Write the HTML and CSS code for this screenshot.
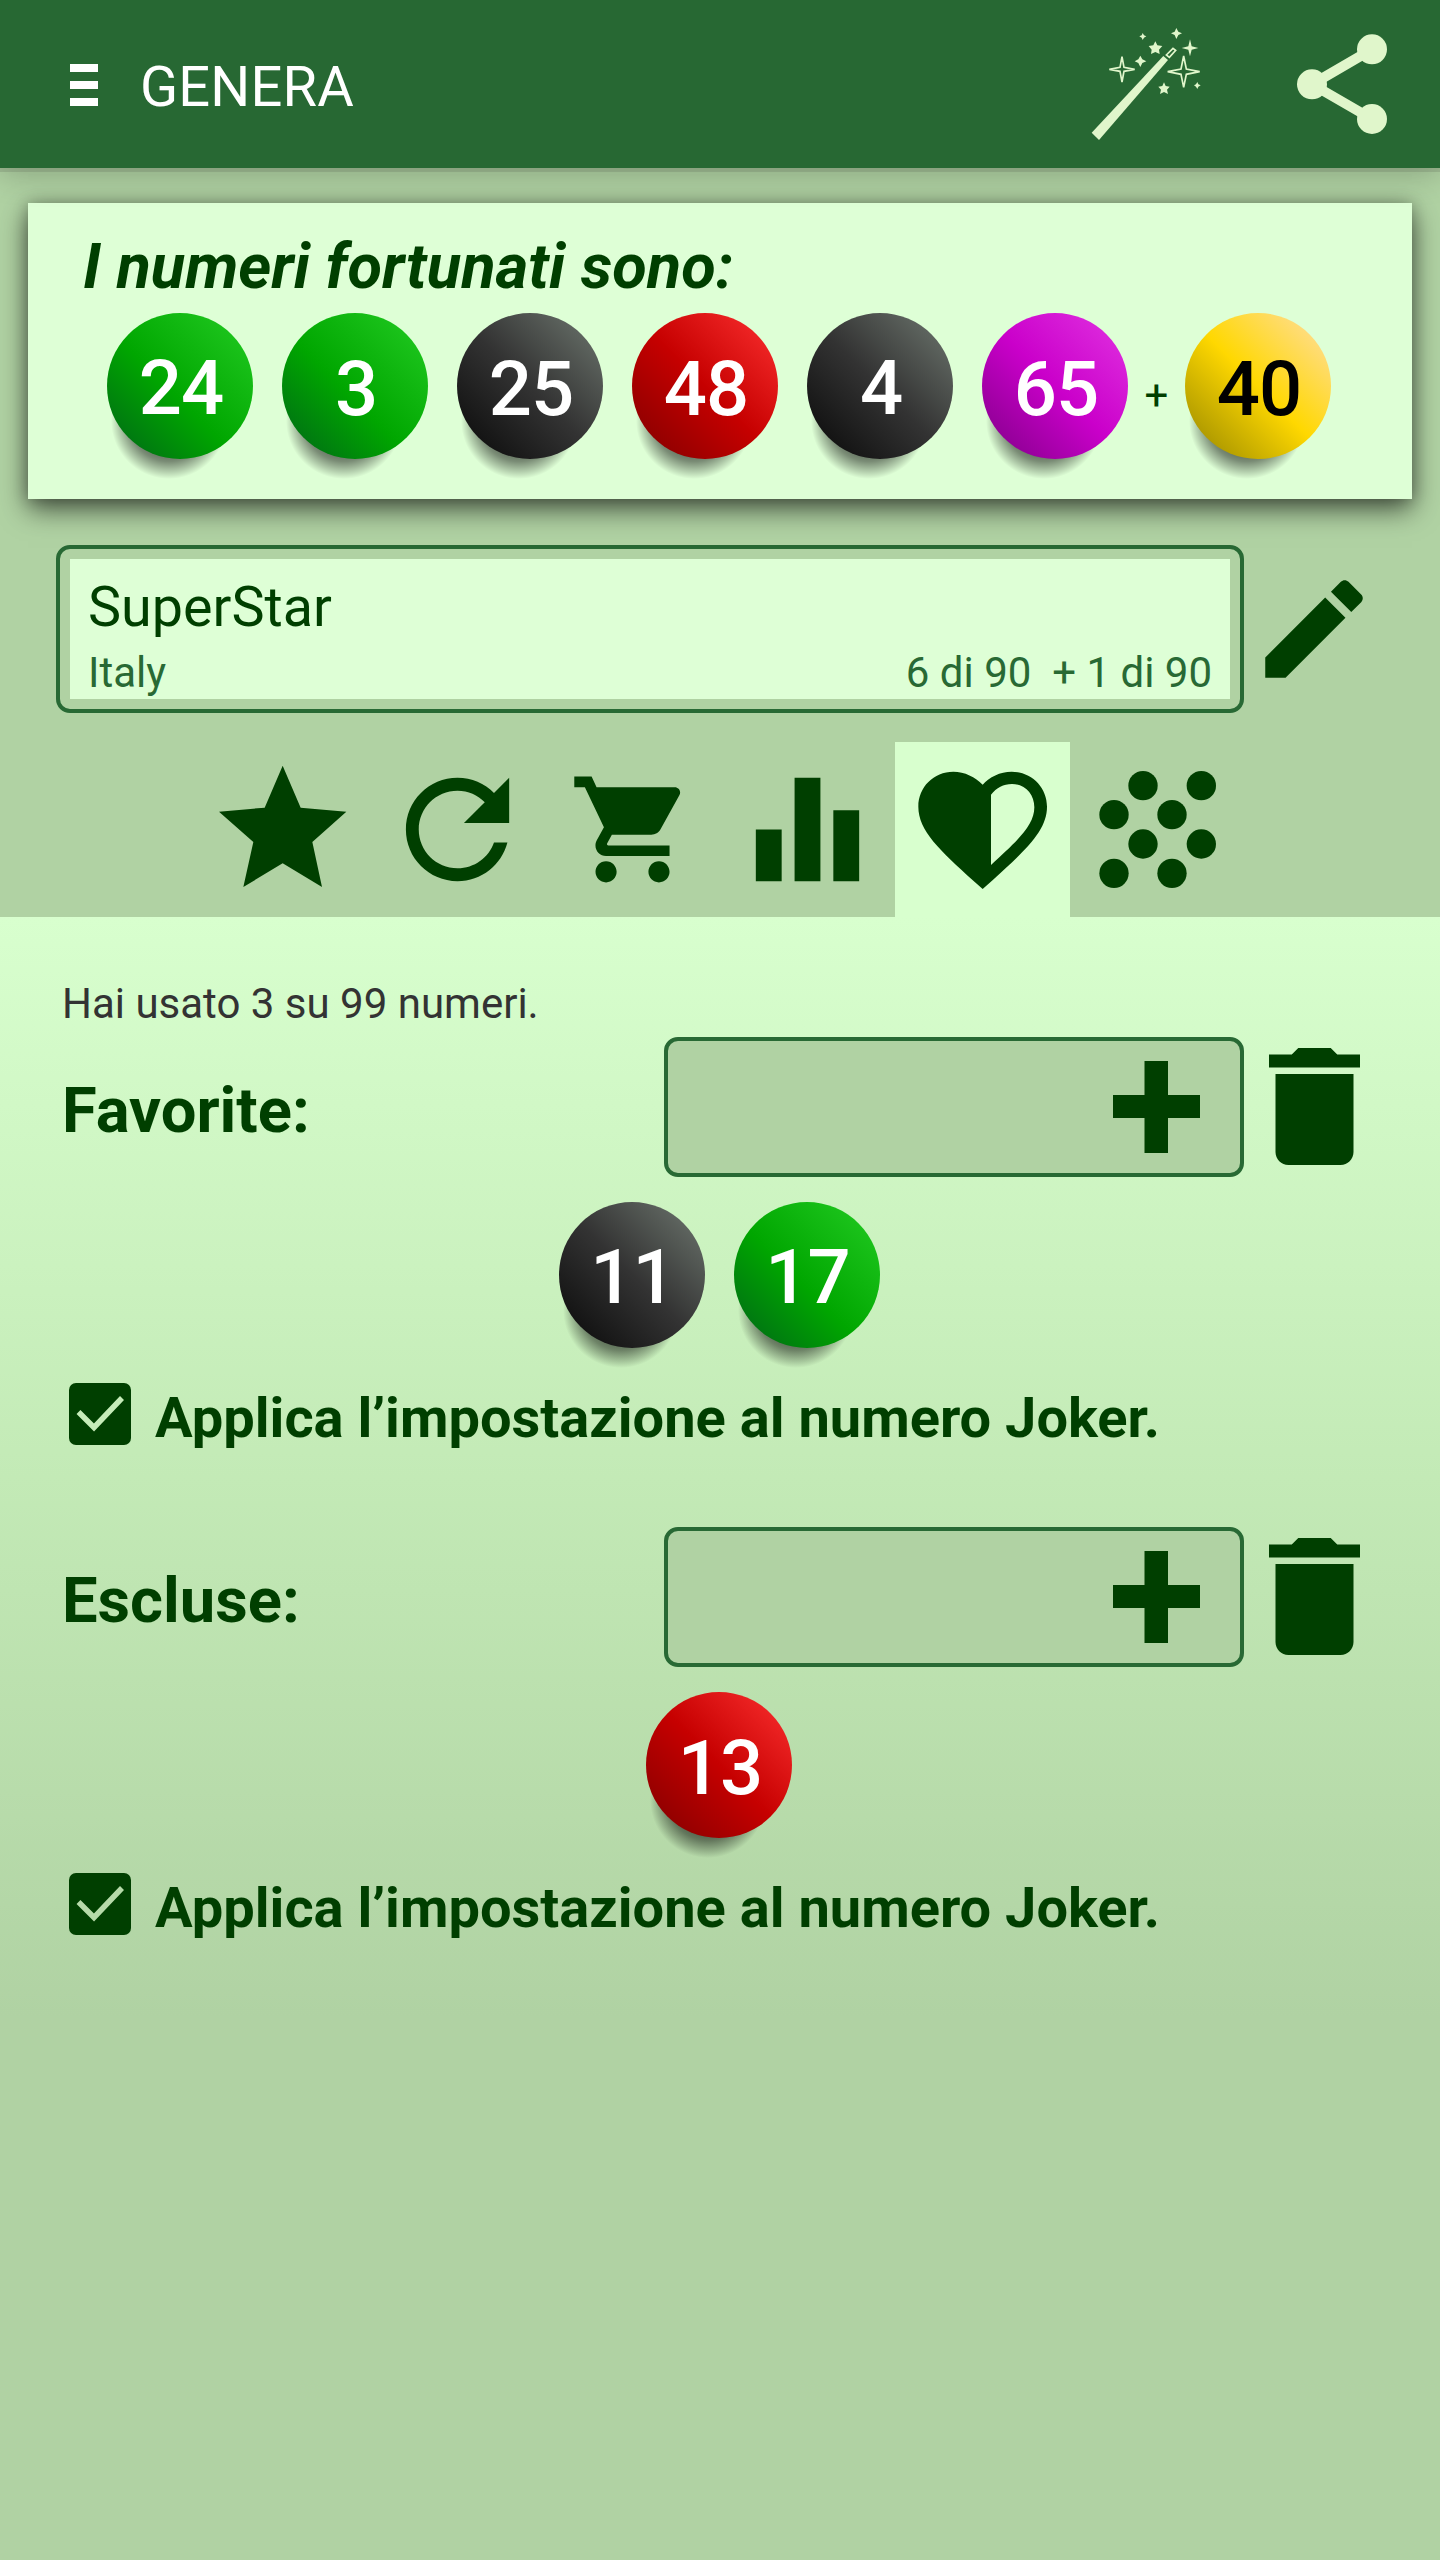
FILE: index.html
```html
<!DOCTYPE html>
<html lang="it">
<head>
<meta charset="utf-8">
<title>Genera</title>
<link rel="stylesheet" href="styles.css">
</head>
<body>
<header class="appbar">
  <div class="menu"><i></i><i></i><i></i></div>
  <h1 class="appbar-title">GENERA</h1>
  <svg class="wand" viewBox="0 0 390 375">
    <path d="M35 338 250 108l14 12L57 360z"/>
    <g fill="none" stroke="#e0f6cb" stroke-width="5">
      <path d="m259 105 20-20 8 6-19 21zM126 110l6 32 32 6-32 6-6 32-6-32-32-6 32-6zM311 108l8 39 40 8-40 8-8 39-8-39-40-8 40-8z"/>
    </g>
    <path d="m188 39 4 7 7 3-7 4-4 7-3-7-7-4 7-3zM289 24l6 11 11 5-11 5-6 12-5-12-11-5 11-5zM330 58l5 21 20 5-20 5-5 20-5-20-20-5 20-5zM181 107l6 11 12 6-12 5-6 12-6-12-11-5 11-6zM352 186l3 7 7 3-7 4-3 7-4-7-6-4 6-3zM226 64l6 12 15 2-10 11 2 13-13-6-13 6 2-13-9-11 14-2zM252 187l5 11 12 2-8 9 3 13-12-6-12 6 3-13-8-9 12-2z"/>
  </svg>
  <svg class="share" viewBox="0 0 270 300">
    <path d="M225 46 45 151l180 104" fill="none" stroke="#e0f6cb" stroke-width="30"/>
    <circle cx="225" cy="46" r="45"/><circle cx="45" cy="151" r="45"/><circle cx="225" cy="255" r="45"/>
  </svg>
</header>
<main>
  <section class="lucky">
    <h2 class="lucky-title">I numeri fortunati sono:</h2>
    <div class="balls">
      <span class="ball green">24</span>
      <span class="ball green round">3</span>
      <span class="ball black round">25</span>
      <span class="ball red round">48</span>
      <span class="ball black">4</span>
      <span class="ball purple round">65</span>
      <span class="plus">+</span>
      <span class="ball yellow round">40</span>
    </div>
  </section>
  <section class="picker">
    <div class="game">
      <div class="game-name">SuperStar</div>
      <div class="game-info"><span>Italy</span><span class="rule">6 di 90&nbsp; + 1 di 90</span></div>
    </div>
    <svg class="edit" viewBox="0 0 24 24"><path d="M3 17.25V21h3.75L17.81 9.94l-3.75-3.75L3 17.25zM20.71 7.04c.39-.39.39-1.02 0-1.41l-2.34-2.34c-.39-.39-1.02-.39-1.41 0l-1.83 1.83 3.75 3.75 1.83-1.83z"/></svg>
  </section>
  <nav class="tabs">
    <div class="tab"><svg viewBox="-15 36 525 525"><path d="m248 107 54 126 137 12-102 91 29 135-118-71-118 71 30-135L57 245l137-12z"/></svg></div>
    <div class="tab"><svg class="icon-l" viewBox="0 0 24 24"><path d="M17.65 6.35C16.2 4.9 14.21 4 12 4c-4.42 0-7.99 3.58-7.99 8s3.57 8 7.99 8c3.73 0 6.84-2.55 7.73-6h-2.08c-.82 2.33-3.04 4-5.65 4-3.31 0-6-2.69-6-6s2.69-6 6-6c1.66 0 3.14.69 4.22 1.78L13 11h7V4l-2.35 2.35z"/></svg></div>
    <div class="tab"><svg class="icon-s" viewBox="0 0 24 24"><path d="M7 18c-1.1 0-1.99.9-1.99 2S5.900 22 7 22s2-.9 2-2-.9-2-2-2zM1 2v2h2l3.600 7.590-1.350 2.450c-.160.280-.250.610-.250.960 0 1.100.9 2 2 2h12v-2H7.420c-.140 0-.250-.110-.250-.250l.030-.120.900-1.630h7.450c.750 0 1.410-.410 1.750-1.030l3.580-6.490c.080-.140.120-.310.120-.480 0-.550-.450-1-1-1H5.210l-.940-2H1zm16 16c-1.100 0-1.990.9-1.990 2s.890 2 1.990 2 2-.9 2-2-.9-2-2-2z"/></svg></div>
    <div class="tab"><svg class="icon-l" viewBox="0 0 24 24"><path d="M10 20h4V4h-4v16zm-6 0h4v-8H4v8zM16 9v11h4V9h-4z"/></svg></div>
    <div class="tab active"><svg viewBox="525 36 525 525"><path fill-rule="evenodd" d="M788 477 760 452C660 361 595 302 595 230 595 171 641 125 700 125c34 0 66 16 88 39 20-23 52-39 87-39 59 0 106 46 106 105 0 72-65 131-165 222zM813 194v211c82-75 130-120 130-173 0-40-28-70-67-70-26 0-46 11-63 32z"/></svg></div>
    <div class="tab"><svg viewBox="1050 36 525 525"><circle cx="1269" cy="167" r="44"/><circle cx="1444" cy="167" r="44"/><circle cx="1182" cy="254" r="44"/><circle cx="1356" cy="254" r="44"/><circle cx="1269" cy="342" r="44"/><circle cx="1444" cy="342" r="44"/><circle cx="1182" cy="430" r="44"/><circle cx="1356" cy="430" r="44"/></svg></div>
  </nav>
  <section class="panel">
    <p class="usage">Hai usato 3 su 99 numeri.</p>
    <div class="group">
      <div class="entry">
        <h3 class="entry-label">Favorite:</h3>
        <div class="field"><svg class="add" viewBox="0 0 87 92"><path d="M31.500 0h23.500v34H87v23H55v35H31.500V57H0V34h31.500z"/></svg></div>
        <svg class="trash" viewBox="5 3 14 18"><path d="M6 19c0 1.100.9 2 2 2h8c1.100 0 2-.9 2-2V7H6v12zM19 4h-3.500l-1-1h-5l-1 1H5v2h14V4z"/></svg>
      </div>
      <div class="picked"><span class="ball black">11</span><span class="ball green">17</span></div>
      <div class="option">
        <svg class="check" viewBox="0 0 62 62"><rect width="62" height="62" rx="7"/><path d="M9.500 29 25 44.500 53 15" fill="none" stroke="#c6ecb9" stroke-width="5.500"/></svg>
        <span>Applica l’impostazione al numero Joker.</span>
      </div>
    </div>
    <div class="group">
      <div class="entry">
        <h3 class="entry-label">Escluse:</h3>
        <div class="field"><svg class="add" viewBox="0 0 87 92"><path d="M31.500 0h23.500v34H87v23H55v35H31.500V57H0V34h31.500z"/></svg></div>
        <svg class="trash" viewBox="5 3 14 18"><path d="M6 19c0 1.100.9 2 2 2h8c1.100 0 2-.9 2-2V7H6v12zM19 4h-3.500l-1-1h-5l-1 1H5v2h14V4z"/></svg>
      </div>
      <div class="picked"><span class="ball red round">13</span></div>
      <div class="option">
        <svg class="check" viewBox="0 0 62 62"><rect width="62" height="62" rx="7"/><path d="M9.500 29 25 44.500 53 15" fill="none" stroke="#b6daa9" stroke-width="5.500"/></svg>
        <span>Applica l’impostazione al numero Joker.</span>
      </div>
    </div>
  </section>
</main>
</body>
</html>
```

FILE: styles.css
```css
* { box-sizing: border-box; margin: 0; padding: 0; }

body {
  width: 1440px;
  height: 2560px;
  overflow: hidden;
  display: flex;
  flex-direction: column;
  background: #b0d2a3;
  color: #003f00;
  font-family: Roboto, "Liberation Sans", sans-serif;
}

svg { display: block; fill: #003f00; flex: none; }

.appbar {
  height: 168px;
  flex: none;
  display: flex;
  align-items: flex-start;
  padding-left: 70px;
  background: #276833;
  box-shadow: 0 4px 0 rgba(100, 110, 90, .25), 0 6px 30px rgba(0, 0, 0, .22);
  z-index: 1;
}
.menu { width: 28px; margin-top: 64px; display: flex; flex-direction: column; gap: 9.500px; }
.menu i { height: 7.500px; background: #fff; }
.appbar-title { margin: 54px auto 0 42px; font-size: 56px; line-height: 66px; font-weight: 400; letter-spacing: .2px; color: #fff; }
.wand { width: 130px; height: 125px; margin: 20px 87px 0 0; }
.wand, .share { fill: #e0f6cb; }
.share { width: 90px; height: 100px; margin: 34px 53px 0 0; }

main { display: flex; flex-direction: column; flex: 1; }

.lucky {
  height: 296px;
  margin: 35px 28px 0;
  padding: 26px 55px 0;
  background: #deffd6;
  box-shadow: 0 10px 26px rgba(0, 0, 0, .62), 0 0 14px rgba(0, 0, 0, .22);
}
.lucky-title { font-size: 63.200px; line-height: 75px; font-weight: 700; font-style: italic; }
.balls { display: flex; gap: 29px; margin: 9px 0 0 24px; }
.plus { width: 27px; margin: 58px -14px 0; font-size: 42px; line-height: 49px; text-align: center; }

.ball {
  position: relative;
  width: 146px;
  height: 146px;
  padding: 30px 0 0 2px;
  border-radius: 50%;
  font-size: 76px;
  line-height: 90px;
  font-weight: 500;
  letter-spacing: -1px;
  text-align: center;
  color: #fff;
}
.ball.round { padding-top: 31px; }
/* soft contact shadow under the ball */
.ball::before {
  content: "";
  position: absolute;
  z-index: -1;
  left: 4px;
  top: 50px;
  width: 116px;
  height: 116px;
  border-radius: 50%;
  background: radial-gradient(closest-side, rgba(0, 0, 0, .8) 30%, rgba(0, 0, 0, .45) 70%, rgba(0, 0, 0, .2) 87%, transparent);
}
.lucky, .panel { position: relative; isolation: isolate; }
.green { background: linear-gradient(45deg, #007014 8%, #00a600 45%, #1cc41c 88%); }
.black { background: linear-gradient(45deg, #101010 10%, #333 50%, #616862 88%); }
.red { background: linear-gradient(45deg, #900000 12%, #c60000 50%, #f02626 88%); }
.purple { background: linear-gradient(45deg, #8a0090 8%, #ca00ca 50%, #dc28dc 88%); }
.yellow { background: linear-gradient(45deg, #ac9800 12%, #ffd800 50%, #ffdc78 85%); color: #000; }

.picker { display: flex; margin: 46px 0 0 56px; }
.game {
  width: 1188px;
  height: 168px;
  padding: 25px 28px 0;
  border: 4px solid #286934;
  border-radius: 14px;
  background: linear-gradient(#deffd6, #deffd6) center / 1160px 140px no-repeat;
}
.game-name { font-size: 55.700px; line-height: 66px; }
.game-info { display: flex; justify-content: space-between; font-size: 42px; line-height: 50px; color: #286934; margin-top: 8px; }
.edit { width: 130px; height: 130px; margin: 19px 0 0 5px; }

.tabs { display: flex; margin: 29px 0 0 195px; }
.tab { width: 175px; height: 175px; display: grid; place-items: center; }
.tab svg { width: 175px; height: 175px; }
.tab .icon-l { width: 155px; height: 155px; }
.tab .icon-s { width: 127px; height: 127px; }
.tab.active { background: #d8ffce; }

.panel {
  flex: 1;
  padding: 62px 62px 0;
  background: linear-gradient(#d8ffce, #c3eab6 560px, #b0d2a3 1100px);
}
.usage { font-size: 42px; line-height: 50px; height: 58px; color: #333; }
.group { height: 490px; }
.entry { display: flex; height: 140px; }
.entry-label { width: 602px; padding-top: 35px; font-size: 63.300px; line-height: 76px; font-weight: 700; }
.field {
  width: 580px;
  height: 140px;
  padding: 20px 40px 0 0;
  border: 4px solid #286934;
  border-radius: 14px;
  background: #b0d2a3;
  display: flex;
  justify-content: flex-end;
}
.add { width: 87px; height: 92px; }
.trash { width: 91px; height: 117px; margin: 11px 0 0 25px; }
.picked { display: flex; justify-content: center; gap: 29px; height: 146px; margin: 25px 2px 0 0; }
.option { display: flex; margin: 35px 0 0 7px; font-size: 56px; line-height: 66px; font-weight: 700; white-space: nowrap; }
.check { width: 62px; height: 62px; margin-right: 24px; }
.option span { padding-top: 2px; }
```
